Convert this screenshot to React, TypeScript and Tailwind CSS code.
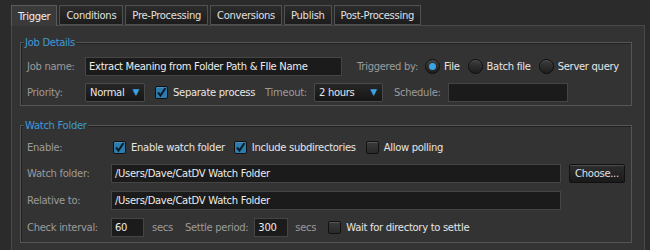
import React from "react";

const tabs = ["Trigger", "Conditions", "Pre-Processing", "Conversions", "Publish", "Post-Processing"];

function Check({ on }: { on?: boolean }) {
  return (
    <span
      className={`flex h-[13px] w-[13px] items-center justify-center rounded-[2px] border border-[#111] ${
        on ? "bg-[#2b7db0]" : "bg-[linear-gradient(#3a3a3a,#2a2a2a)]"
      } shadow-[inset_0_1px_0_rgba(255,255,255,0.15)]`}
    >
      {on && (
        <svg width="11" height="11" viewBox="0 0 11 11">
          <path d="M2 5.5 L4.5 8.5 L9.5 1" stroke="#0d1a24" strokeWidth="2" fill="none" />
        </svg>
      )}
    </span>
  );
}

function Radio({ on }: { on?: boolean }) {
  return (
    <span className="flex h-[15px] w-[15px] items-center justify-center rounded-full border border-[#0e0e0e] bg-[linear-gradient(#3c3c3c,#1e1e1e)] shadow-[inset_0_1px_0_rgba(255,255,255,0.12)]">
      {on && <span className="h-[7px] w-[7px] rounded-full bg-[#3ba3e3]" />}
    </span>
  );
}

function Select({ value, w }: { value: string; w: string }) {
  return (
    <div
      className={`${w} flex h-[19px] items-center justify-between rounded-[2px] border border-[#4a4a4a] bg-[linear-gradient(#262626,#161616)] pl-[4px] pr-[5px] text-[#e6e6e6]`}
    >
      <span>{value}</span>
      <span className="text-[9px] text-[#3ba3e3]">▼</span>
    </div>
  );
}

function Field({ value, w }: { value?: string; w: string }) {
  return (
    <div className={`${w} flex h-[19px] items-center overflow-hidden border border-[#454545] bg-[#1b1b1b] px-[3px] text-[#ececec]`}>
      {value}
    </div>
  );
}

function Legend({ title }: { title: string }) {
  return (
    <span className="absolute -top-[8px] left-[3px] bg-[#333333] px-[1px] text-[#3d9ad3]">{title}</span>
  );
}

export default function App() {
  return (
    <div
      className="h-[250px] w-[650px] overflow-hidden whitespace-nowrap bg-[#2b2b2b] text-[10px] text-[#9b9b9b]"
      style={{ fontFamily: '"DejaVu Sans", "Noto Sans", sans-serif', letterSpacing: "-0.3px" }}
    >
      {/* tabs */}
      <div className="flex h-[25px] items-end gap-[2px] pl-[11px]">
        {tabs.map((t, i) => (
          <div
            key={t}
            className={
              i === 0
                ? "relative z-10 -mb-px flex h-[21px] items-center border border-b-0 border-[#5a5a5a] bg-[#3a3a3a] px-[6px] text-[#f0f0f0]"
                : "flex h-[20px] items-center border border-[#505050] bg-[linear-gradient(#2c2c2c,#1c1c1c)] px-[6px] text-[#e0e0e0]"
            }
          >
            {t}
          </div>
        ))}
      </div>

      {/* panel */}
      <div className="ml-[11px] mr-[5px] h-[240px] border-l border-r border-t border-[#4a4a4a] bg-[#333333] pl-[8px] pr-[12px] pt-[16px]">
        {/* Job details */}
        <div className="relative h-[64px] border border-[#555] shadow-[inset_1px_1px_0_#222]">
          <Legend title="Job Details" />
          <div className="box-content flex h-[19px] items-center pl-[6px] pt-[14px]">
            <span className="w-[58px]">Job name:</span>
            <Field value="Extract Meaning from Folder Path & FIle Name" w="w-[257px]" />
            <span className="ml-[15px]">Triggered by:</span>
            <span className="ml-[7px]"><Radio on /></span>
            <span className="ml-[4px] text-[#e6e6e6]">File</span>
            <span className="ml-[8px]"><Radio /></span>
            <span className="ml-[4px] text-[#e6e6e6]">Batch file</span>
            <span className="ml-[8px]"><Radio /></span>
            <span className="ml-[4px] text-[#e6e6e6]">Server query</span>
          </div>
          <div className="mt-[7px] flex h-[19px] items-center pl-[6px]">
            <span className="w-[58px]">Priority:</span>
            <Select value="Normal" w="w-[60px]" />
            <span className="ml-[10px]"><Check on /></span>
            <span className="ml-[5px] text-[#e6e6e6]">Separate process</span>
            <span className="ml-[10px]">Timeout:</span>
            <span className="ml-[7px]"><Select value="2 hours" w="w-[69px]" /></span>
            <span className="ml-[11px]">Schedule:</span>
            <span className="ml-[7px]"><Field w="w-[120px]" /></span>
          </div>
        </div>

        {/* Watch folder */}
        <div className="relative mt-[19px] h-[118px] border border-[#555] shadow-[inset_1px_1px_0_#222]">
          <Legend title="Watch Folder" />
          <div className="box-content flex h-[19px] items-center pl-[6px] pt-[12px]">
            <span className="w-[86px]">Enable:</span>
            <Check on />
            <span className="ml-[5px] text-[#e6e6e6]">Enable watch folder</span>
            <span className="ml-[9px]"><Check on /></span>
            <span className="ml-[5px] text-[#e6e6e6]">Include subdirectories</span>
            <span className="ml-[10px]"><Check /></span>
            <span className="ml-[5px] text-[#e6e6e6]">Allow polling</span>
          </div>
          <div className="mt-[7px] flex h-[19px] items-center pl-[6px]">
            <span className="w-[84px]">Watch folder:</span>
            <Field value="/Users/Dave/CatDV Watch Folder" w="w-[450px]" />
            <div className="ml-[8px] flex h-[19px] w-[56px] items-center justify-center rounded-[2px] border border-[#111] bg-[linear-gradient(#2e2e2e,#1a1a1a)] text-[#e0e0e0] shadow-[inset_0_1px_0_rgba(255,255,255,0.15)]">
              Choose...
            </div>
          </div>
          <div className="mt-[8px] flex h-[19px] items-center pl-[6px]">
            <span className="w-[84px]">Relative to:</span>
            <Field value="/Users/Dave/CatDV Watch Folder" w="w-[450px]" />
          </div>
          <div className="mt-[8px] flex h-[18px] items-center pl-[6px]">
            <span className="w-[84px]">Check interval:</span>
            <Field value="60" w="w-[33px]" />
            <span className="ml-[8px]">secs</span>
            <span className="ml-[12px]">Settle period:</span>
            <span className="ml-[6px]"><Field value="300" w="w-[34px]" /></span>
            <span className="ml-[7px]">secs</span>
            <span className="ml-[12px]"><Check /></span>
            <span className="ml-[5px] text-[#e6e6e6]">Wait for directory to settle</span>
          </div>
        </div>
      </div>
    </div>
  );
}
